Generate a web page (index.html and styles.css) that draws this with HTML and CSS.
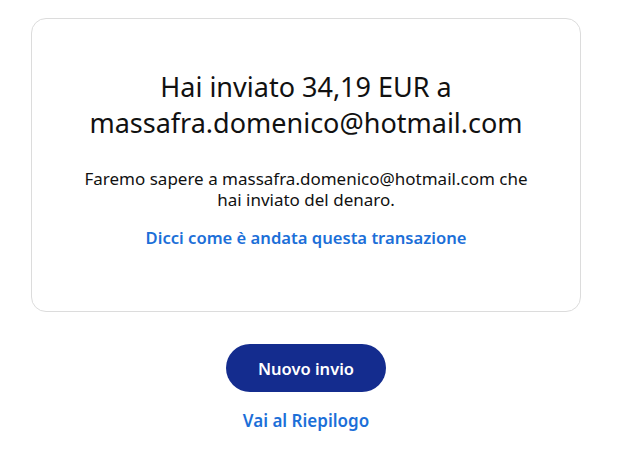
FILE: index.html
```html
<!DOCTYPE html>
<html>
<head>
  <meta charset="utf-8">
  <link rel="stylesheet" href="styles.css">
</head>
<body>
  <div class="page">
    <!-- Confirmation card -->
    <div class="card">
      <h1 class="title">Hai inviato 34,19 EUR a massafra.domenico@hotmail.com</h1>
      <p class="message">Faremo sapere a massafra.domenico@hotmail.com che hai inviato del denaro.</p>
      <a class="link" href="#">Dicci come è andata questa transazione</a>
    </div>

    <!-- Actions -->
    <div class="actions">
      <button class="primary-button">Nuovo invio</button>
      <a class="link" href="#">Vai al Riepilogo</a>
    </div>
  </div>
</body>
</html>
```

FILE: styles.css
```css
body {
  margin: 0;
  background: #fff;
  font-family: 'Noto Sans', 'Open Sans', sans-serif;
  color: #111;
}

.page {
  width: 550px;
  margin-left: 31px;
  padding-top: 18px;
}

.card {
  border: 1px solid #dcdcdc;
  border-radius: 15px;
  height: 294px;
  box-sizing: border-box;
  padding: 50px 30px 0;
  display: flex;
  flex-direction: column;
  align-items: center;
  text-align: center;
}

.title {
  margin: 0;
  font-size: 27px;
  font-weight: 400;
  line-height: 36px;
  width: 480px;
}

.message {
  margin: 27px 0 0;
  font-size: 17px;
  line-height: 21px;
  width: 460px;
}

.link {
  color: #1c6fd8;
  font-weight: 600;
  font-size: 16.6px;
  text-decoration: none;
}

.card .link {
  margin-top: 16px;
}

.actions {
  display: flex;
  flex-direction: column;
  align-items: center;
  padding-top: 32px;
  gap: 17px;
}

.actions .link {
  font-size: 17px;
}

.primary-button {
  background: #142c8e;
  color: #fff;
  border: none;
  border-radius: 24px;
  height: 48px;
  width: 160px;
  font-family: inherit;
  font-size: 16.5px;
  font-weight: 600;
  cursor: pointer;
}
```
